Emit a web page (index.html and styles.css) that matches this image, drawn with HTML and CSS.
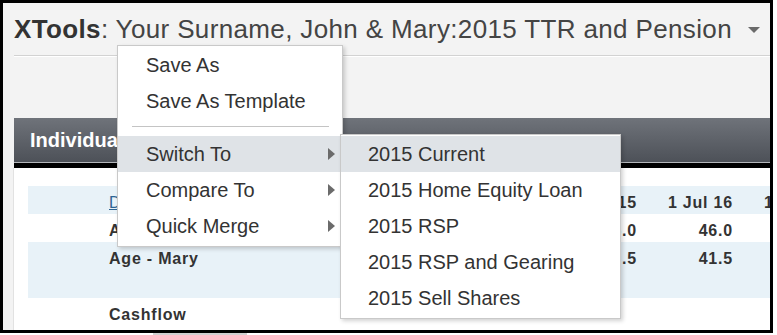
FILE: index.html
```html
<!DOCTYPE html>
<html>
<head>
<meta charset="utf-8">
<link rel="stylesheet" href="styles.css">
</head>
<body>
<div class="frame">
  <div class="header">
    <div class="title"><b>XTools</b>: Your Surname, John &amp; Mary:2015 TTR and Pension</div>
    <span class="caret"></span>
  </div>
  <div class="bar">Individual Details</div>
  <div class="bar-edge"></div>
  <div class="content">
    <div class="grid">
      <div class="row blue">
        <div class="label"><a class="link">Date</a></div>
        <div class="val">1 Jul 15</div>
        <div class="val">1 Jul 16</div>
        <div class="val">1 Jul 17</div>
      </div>
      <div class="row">
        <div class="label">Age - John</div>
        <div class="val">45.0</div>
        <div class="val">46.0</div>
        <div class="val">47.0</div>
      </div>
      <div class="row blue tall">
        <div class="label">Age - Mary</div>
        <div class="val">40.5</div>
        <div class="val">41.5</div>
        <div class="val">42.5</div>
      </div>
      <div class="row">
        <div class="label">Cashflow</div>
      </div>
    </div>
  </div>

  <div class="menu main-menu">
    <div class="item">Save As</div>
    <div class="item">Save As Template</div>
    <div class="sep"></div>
    <div class="item sub active">Switch To</div>
    <div class="item sub">Compare To</div>
    <div class="item sub">Quick Merge</div>
  </div>

  <div class="menu sub-menu">
    <div class="item active">2015 Current</div>
    <div class="item">2015 Home Equity Loan</div>
    <div class="item">2015 RSP</div>
    <div class="item">2015 RSP and Gearing</div>
    <div class="item">2015 Sell Shares</div>
  </div>
</div>
<div class="under"></div>
</body>
</html>
```

FILE: styles.css
```css
html, body {
  margin: 0;
  padding: 0;
  background: #fff;
}

body {
  font-family: "Liberation Sans", Arial, sans-serif;
  color: #333;
}

.frame {
  position: relative;
  width: 767px;
  height: 327px;
  border: 3px solid #000;
  background: #f3f3f3;
  overflow: hidden;
}

.header {
  display: flex;
  align-items: center;
  justify-content: space-between;
  margin-left: 11px;
  padding: 11px 10px 11px 0;
  border-bottom: 1px solid #d2d2d2;
  box-shadow: 0 1px 0 #fff;
}

.title {
  font-size: 26px;
  line-height: 30px;
  letter-spacing: 0.36px;
  color: #444;
  white-space: nowrap;
}

.title b {
  color: #333;
}

.caret {
  width: 0;
  height: 0;
  border-left: 6px solid transparent;
  border-right: 6px solid transparent;
  border-top: 6px solid #6a6a6a;
  margin-top: 1px;
}

.bar {
  margin: 62px 0 0 11px;
  height: 44px;
  padding-left: 16px;
  background: linear-gradient(#6f737a, #4d5158);
  border-bottom: 1px solid #b4b7bb;
  color: #fff;
  font-size: 20px;
  font-weight: bold;
  line-height: 44px;
  white-space: nowrap;
}

.bar-edge {
  margin-left: 11px;
  height: 5px;
  background: #000;
}

.content {
  margin-left: 10px;
  border-left: 1px solid #e2e2e2;
  background: #fff;
  height: 200px;
  padding: 18px 0 0 14px;
  overflow: hidden;
}

.grid {
  display: flex;
  flex-direction: column;
  width: 900px;
}

.row {
  display: grid;
  grid-template-columns: 513px 96px 96px 96px;
  height: 28px;
  box-sizing: border-box;
  padding-top: 8px;
  font-size: 16px;
  line-height: 18px;
  font-weight: bold;
  letter-spacing: 0.8px;
  color: #333;
}

.row.blue {
  background: #e8f2f8;
}

.row.tall {
  height: 56px;
}

.label {
  padding-left: 81px;
  white-space: nowrap;
}

.val {
  text-align: right;
  white-space: nowrap;
}

.link {
  color: #2c6392;
  text-decoration: underline;
  font-weight: normal;
}

.menu {
  position: absolute;
  background: #fff;
  border: 1px solid #c9c9c9;
  box-shadow: 2px 2px 4px rgba(0, 0, 0, 0.18);
  font-size: 20px;
  color: #333;
}

.main-menu {
  left: 114px;
  top: 42px;
  width: 224px;
  padding: 1px 0 2px;
  z-index: 1;
}

.sub-menu {
  left: 337px;
  top: 131px;
  width: 279px;
  padding: 1px 0 2px;
  z-index: 2;
}

.item {
  position: relative;
  height: 36px;
  line-height: 36px;
  padding-left: 27px;
  white-space: nowrap;
}

.main-menu .item {
  padding-left: 28px;
}

.item.active {
  background: #dfe3e7;
}

.item.sub::after {
  content: "";
  position: absolute;
  right: 7px;
  top: 12px;
  width: 0;
  height: 0;
  border-top: 6px solid transparent;
  border-bottom: 6px solid transparent;
  border-left: 7px solid #6b6b6b;
}

.sep {
  height: 1px;
  margin: 7px 13px 9px 14px;
  background: #c4c4c4;
}

.under {
  margin-left: 153px;
  width: 94px;
  height: 2px;
  background: #d0d0d0;
}
```
